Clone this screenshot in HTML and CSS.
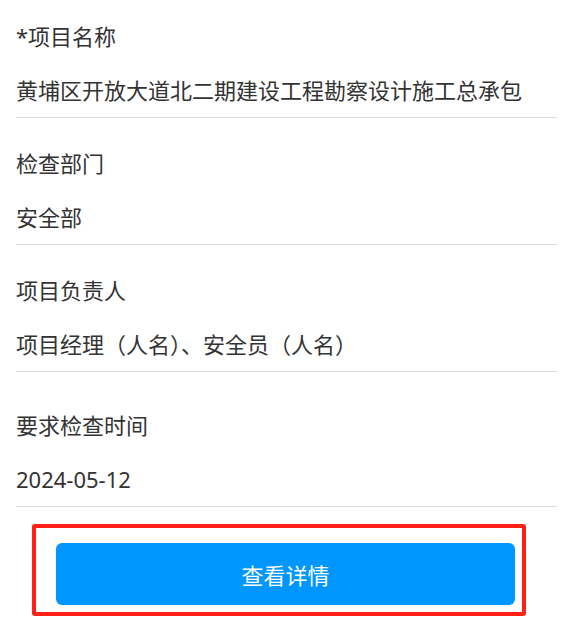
FILE: index.html
```html
<!DOCTYPE html>
<html lang="zh-CN">
<head>
<meta charset="utf-8">
<link rel="stylesheet" href="styles.css">
</head>
<body>
<div class="page">
  <div class="field">
    <div class="label">*项目名称</div>
    <div class="value">黄埔区开放大道北二期建设工程勘察设计施工总承包</div>
  </div>
  <div class="field">
    <div class="label">检查部门</div>
    <div class="value">安全部</div>
  </div>
  <div class="field field-spaced">
    <div class="label">项目负责人</div>
    <div class="value">项目经理（人名）、安全员（人名）</div>
  </div>
  <div class="field field-last">
    <div class="label">要求检查时间</div>
    <div class="value">2024-05-12</div>
  </div>
  <div class="highlight">
    <button class="btn">查看详情</button>
  </div>
</div>
</body>
</html>
```

FILE: styles.css
```css
html, body {
  margin: 0;
  padding: 0;
  background: #ffffff;
}
.page {
  padding: 21px 15px 0 16px;
  font-family: "Noto Sans", "Noto Sans CJK SC", sans-serif;
  color: #333333;
  display: flex;
  flex-direction: column;
}
.field {
  display: flex;
  flex-direction: column;
  gap: 24px;
  padding-bottom: 12px;
  border-bottom: 1.5px solid #dcdcdc;
  margin-bottom: 30px;
}
.field-spaced {
  margin-bottom: 38px;
}
.field-last {
  margin-bottom: 17px;
}
.label, .value {
  font-size: 22px;
  line-height: 30px;
  height: 30px;
  white-space: nowrap;
}
.highlight {
  margin-left: 16px;
  width: 494px;
  box-sizing: border-box;
  border: 4px solid #ff2016;
  border-radius: 3px;
  padding: 15px 7px 7px 20px;
}
.btn {
  display: block;
  width: 459px;
  height: 62px;
  border: none;
  border-radius: 6px;
  background: #0096ff;
  color: #ffffff;
  font-family: "Noto Sans", "Noto Sans CJK SC", sans-serif;
  font-size: 22px;
  padding: 0;
  cursor: pointer;
}
```
